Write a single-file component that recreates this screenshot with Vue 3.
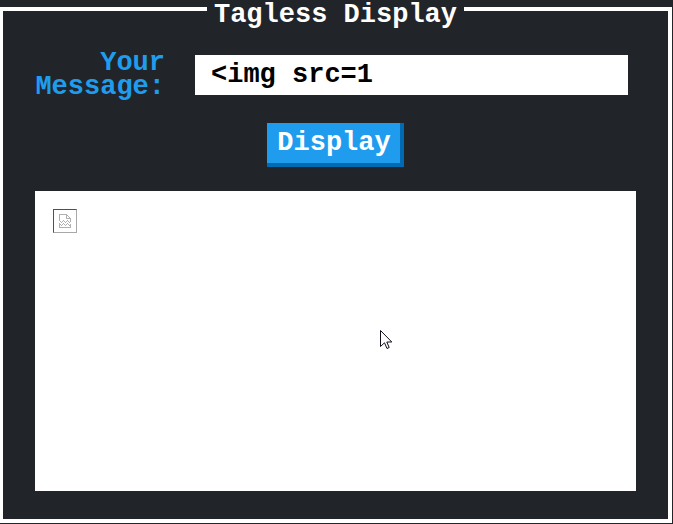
<script setup>
import { ref } from 'vue'

const message = ref('<img src=1')
const shown = ref(true)

function display() {
  shown.value = message.value.length > 0
}
</script>

<template>
  <main class="page">
    <section class="panel">
      <h1 class="title">Tagless Display</h1>
      <form class="form" @submit.prevent="display">
        <div class="field">
          <label class="label" for="message">Your Message:</label>
          <input id="message" v-model="message" class="input" type="text" autocomplete="off" spellcheck="false" />
        </div>
        <button class="button" type="submit">Display</button>
      </form>
      <div class="output">
        <span v-if="shown" class="broken">
          <svg width="14" height="16" viewBox="0 0 14 16" fill="none" stroke="#b0b0b0" shape-rendering="crispEdges">
            <path d="M1.5 8V1.5H8.5L12.5 5.5V8" />
            <path d="M8.5 1.5V5.5H12.5" />
            <path d="M1.5 7.5L3.5 9.5L5.5 7.5L7.5 9.5L9.5 7.5L11.5 9.5L12.5 8.5" />
            <path d="M1.5 14.5V10.5L3.5 12.5L5.5 10.5L7.5 12.5L9.5 10.5L11.5 12.5L12.5 11.5V14.5Z" />
          </svg>
        </span>
        <svg class="pointer" width="13" height="20" viewBox="0 0 13 20">
          <path d="M.5 .5V16.5L4.5 12.8L7 18.5L9.2 17.5L6.8 12H11.8Z" fill="#fff" stroke="#10101c" />
        </svg>
      </div>
    </section>
  </main>
</template>

<style>
body {
  margin: 0;
  background: #212529;
}
</style>

<style scoped>
.page {
  padding: 7px 1px 1px 0;
  font-family: "Liberation Mono", monospace;
  font-size: 27px;
  font-weight: 700;
  line-height: 24px;
}

.panel {
  display: flex;
  flex-direction: column;
  padding: 0 32px 28px;
  border: 4px solid #fff;
  border-left-width: 3px;
}

.title {
  align-self: center;
  margin: -10px 0 0;
  padding: 0 7px;
  background: #212529;
  color: #fff;
  font-size: inherit;
  line-height: 28px;
}

.form {
  display: flex;
  flex-direction: column;
  align-items: center;
  gap: 24px;
  margin: 22px 0 24px;
}

.field {
  display: flex;
  align-items: center;
  align-self: stretch;
  padding-right: 8px;
}

.label {
  flex: 0 0 130px;
  margin-right: 30px;
  color: #209cee;
  text-align: right;
}

.input {
  flex: 1;
  min-width: 0;
  height: 40px;
  box-sizing: border-box;
  padding: 0 16px;
  border: 0;
  border-radius: 0;
  outline: 0;
  background: #fff;
  color: #000;
  font: inherit;
}

.button {
  height: 44px;
  padding: 0 13px 4px 10px;
  border: 0;
  background: #209cee;
  box-shadow: inset -4px -4px #006bb3;
  color: #fff;
  font: inherit;
  cursor: pointer;
}

.output {
  position: relative;
  height: 300px;
  box-sizing: border-box;
  padding: 18px;
  background: #fff;
}

.broken {
  display: flex;
  align-items: center;
  justify-content: center;
  width: 22px;
  height: 22px;
  border: 1px solid;
  border-color: #505050 #a8a8a8 #a8a8a8 #505050;
}

.pointer {
  position: absolute;
  top: 139px;
  left: 345px;
}
</style>
